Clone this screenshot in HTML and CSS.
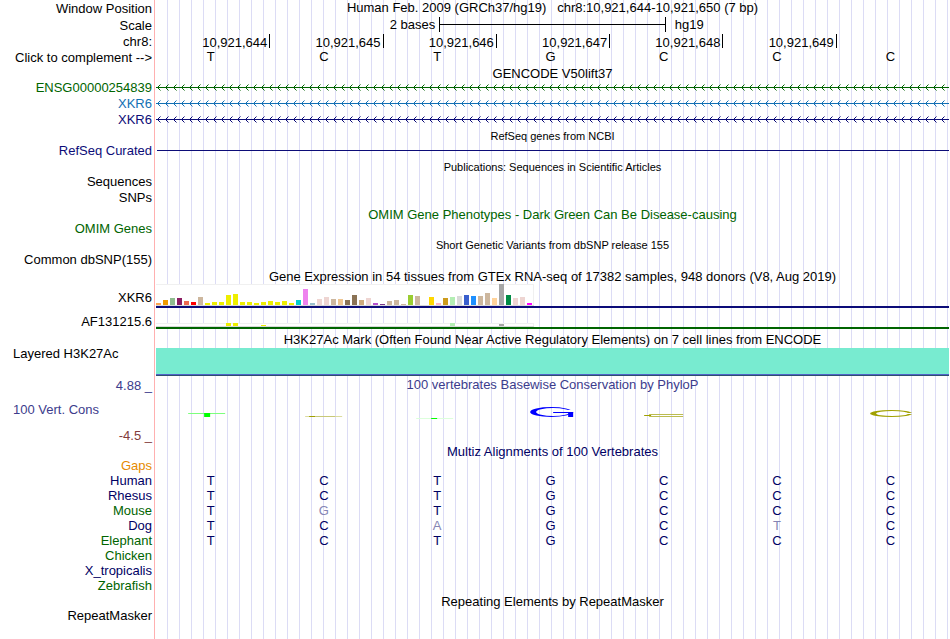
FILE: index.html
```html
<!DOCTYPE html>
<html lang="en">
<head>
<meta charset="utf-8">
<title>Human chr8:10,921,644-10,921,650</title>
<link rel="stylesheet" href="styles.css">
</head>
<body>
<main class="browser">
  <div class="row head"><span class="label">Window Position</span><div class="track"><h1 class="title raised">Human Feb. 2009 (GRCh37/hg19) &nbsp; chr8:10,921,644-10,921,650 (7 bp)</h1></div></div>
  <div class="row head"><span class="label">Scale</span><div class="track scale"><span class="scale-left">2 bases</span><span class="scale-bar"></span><span class="scale-right">hg19</span></div></div>
  <div class="row"><span class="label">chr8:</span><div class="track ticks"><span>10,921,644</span><span>10,921,645</span><span>10,921,646</span><span>10,921,647</span><span>10,921,648</span><span>10,921,649</span></div></div>
  <div class="row short"><span class="label">Click to complement --&gt;</span><div class="track bases raised"><span>T</span><span>C</span><span>T</span><span>G</span><span>C</span><span>C</span><span>C</span></div></div>

  <div class="row short"><div class="track"><h2 class="title">GENCODE V50lift37</h2></div></div>
  <div class="row green"><span class="label">ENSG00000254839</span><div class="track"><svg class="gene"><defs><pattern id="intron1" width="8" height="16" patternUnits="userSpaceOnUse"><path d="M0 7h8v1H0zM2 6h1v1H2zM2 8h1v1H2zM3 5h1v1H3zM3 9h1v1H3z"/><path opacity=".5" d="M4 4h1v1H4zM4 10h1v1H4z"/></pattern></defs><rect width="100%" height="16" fill="url(#intron1)"/></svg></div></div>
  <div class="row blue"><span class="label">XKR6</span><div class="track"><svg class="gene"><defs><pattern id="intron2" width="8" height="16" patternUnits="userSpaceOnUse"><path d="M0 7h8v1H0zM2 6h1v1H2zM2 8h1v1H2zM3 5h1v1H3zM3 9h1v1H3z"/><path opacity=".5" d="M4 4h1v1H4zM4 10h1v1H4z"/></pattern></defs><rect width="100%" height="16" fill="url(#intron2)"/></svg></div></div>
  <div class="row navy"><span class="label">XKR6</span><div class="track"><svg class="gene"><defs><pattern id="intron3" width="8" height="16" patternUnits="userSpaceOnUse"><path d="M0 7h8v1H0zM2 6h1v1H2zM2 8h1v1H2zM3 5h1v1H3zM3 9h1v1H3z"/><path opacity=".5" d="M4 4h1v1H4zM4 10h1v1H4z"/></pattern></defs><rect width="100%" height="16" fill="url(#intron3)"/></svg></div></div>

  <div class="row short"><div class="track"><h2 class="title small">RefSeq genes from NCBI</h2></div></div>
  <div class="row navy"><span class="label">RefSeq Curated</span><div class="track"><svg class="gene"><rect x="1" y="7" width="100%" height="1"/></svg></div></div>

  <div class="row short"><div class="track"><h2 class="title small">Publications: Sequences in Scientific Articles</h2></div></div>
  <div class="row"><span class="label">Sequences</span></div>
  <div class="row"><span class="label">SNPs</span></div>

  <div class="row short green"><div class="track"><h2 class="title">OMIM Gene Phenotypes - Dark Green Can Be Disease-causing</h2></div></div>
  <div class="row green"><span class="label">OMIM Genes</span></div>

  <div class="row short"><div class="track"><h2 class="title small">Short Genetic Variants from dbSNP release 155</h2></div></div>
  <div class="row"><span class="label">Common dbSNP(155)</span></div>

  <div class="row"><div class="track"><h2 class="title">Gene Expression in 54 tissues from GTEx RNA-seq of 17382 samples, 948 donors (V8, Aug 2019)</h2></div></div>
  <div class="row expression"><span class="label">XKR6</span><div class="track"><div class="bars tall" data-gene="XKR6"></div><div class="model navy-line"></div></div></div>
  <div class="row expression-low"><span class="label">AF131215.6</span><div class="track"><div class="bars low" data-gene="AF131215.6"></div><div class="model green-line"></div></div></div>

  <div class="row h3-title"><div class="track"><h2 class="title">H3K27Ac Mark (Often Found Near Active Regulatory Elements) on 7 cell lines from ENCODE</h2></div></div>
  <div class="row h3"><span class="label left">Layered H3K27Ac</span><div class="track"><div class="signal"></div></div></div>

  <div class="row cons indigo"><span class="label">4.88 _</span><div class="track"><h2 class="title">100 vertebrates Basewise Conservation by PhyloP</h2></div></div>
  <div class="row logo indigo"><span class="label left">100 Vert. Cons</span>
    <div class="track logos">
      <svg viewBox="0 0 113 32"><rect x="32" y="19" width="37" height="1" fill="#7dff7d"/><rect x="48" y="19" width="6" height="4" fill="#0f0"/></svg>
      <svg viewBox="0 0 113 32"><rect x="36" y="22" width="37" height="1" fill="#dcdca0"/><rect x="40" y="22" width="6" height="1" fill="#a0a000"/><rect x="46" y="22" width="20" height="1" fill="#c8c878"/></svg>
      <svg viewBox="0 0 113 32"><rect x="33" y="24" width="37" height="1" fill="#dcffdc"/><rect x="48" y="24" width="6" height="1" fill="#0f0"/></svg>
      <svg viewBox="0 0 113 32"><defs><mask id="open-g"><rect width="113" height="32" fill="#fff"/><ellipse cx="57" cy="18" rx="17" ry="4" fill="#000"/><rect x="70" y="16" width="12" height="2" fill="#000"/></mask></defs><ellipse cx="55" cy="18" rx="21" ry="5" fill="#00f" mask="url(#open-g)"/><rect x="57" y="18" width="20" height="1" fill="#00f"/><rect x="72" y="18" width="5" height="5" fill="#00f"/></svg>
      <svg viewBox="0 0 113 32"><rect x="40" y="20" width="34" height="1" fill="#bcbc50"/><rect x="35" y="21" width="7" height="1" fill="#a0a000"/><rect x="40" y="22" width="34" height="1" fill="#bcbc50"/></svg>
      <svg viewBox="0 0 113 32"></svg>
      <svg viewBox="0 0 113 32"><defs><mask id="open-c"><rect width="113" height="32" fill="#fff"/><ellipse cx="56" cy="19.500" rx="16" ry="2.500" fill="#000"/><rect x="70" y="19" width="9" height="1" fill="#000"/></mask></defs><ellipse cx="55" cy="19.500" rx="21" ry="3.500" fill="#a0a000" mask="url(#open-c)"/></svg>
    </div>
  </div>
  <div class="row cons-end maroon"><span class="label">-4.5 _</span></div>

  <div class="row short align-blue"><div class="track"><h2 class="title">Multiz Alignments of 100 Vertebrates</h2></div></div>
  <div class="row short orange"><span class="label">Gaps</span></div>
  <div class="row short align-blue"><span class="label">Human</span><div class="track bases"><span>T</span><span>C</span><span>T</span><span>G</span><span>C</span><span>C</span><span>C</span></div></div>
  <div class="row short align-blue"><span class="label">Rhesus</span><div class="track bases"><span>T</span><span>C</span><span>T</span><span>G</span><span>C</span><span>C</span><span>C</span></div></div>
  <div class="row short align-blue"><span class="label green">Mouse</span><div class="track bases"><span>T</span><span class="diff">G</span><span>T</span><span>G</span><span>C</span><span>C</span><span>C</span></div></div>
  <div class="row short align-blue"><span class="label">Dog</span><div class="track bases"><span>T</span><span>C</span><span class="diff">A</span><span>G</span><span>C</span><span class="diff">T</span><span>C</span></div></div>
  <div class="row short align-blue"><span class="label green">Elephant</span><div class="track bases"><span>T</span><span>C</span><span>T</span><span>G</span><span>C</span><span>C</span><span>C</span></div></div>
  <div class="row short green"><span class="label">Chicken</span></div>
  <div class="row short align-blue"><span class="label">X_tropicalis</span></div>
  <div class="row short green"><span class="label">Zebrafish</span></div>

  <div class="row short"><div class="track"><h2 class="title">Repeating Elements by RepeatMasker</h2></div></div>
  <div class="row short"><span class="label">RepeatMasker</span></div>
</main>
<script src="bars.js"></script>
</body>
</html>
```
FILE: styles.css
```css
* { box-sizing: border-box; }

body {
  margin: 0;
  background: #fff;
  color: #000;
  font: 13px/16px "Liberation Sans", Arial, sans-serif;
}

/* label gutter, pink divider, then a guide line every 12px */
.browser {
  min-height: 100vh;
  background:
    linear-gradient(#ffb0b0, #ffb0b0) 154px 0 / 1px 100% no-repeat,
    linear-gradient(#fff, #fff) 0 0 / 156px 100% no-repeat,
    linear-gradient(to right, #dcdcf5 1px, transparent 1px) 11px 0 / 12px 100% repeat-x;
}

.row {
  display: grid;
  grid-template-columns: 152px minmax(0, 1fr);
  column-gap: 4px;
  height: 16px;
  padding-right: 1px;
  align-items: center;
}
.row.head { height: 17px; }
.row.short { height: 15px; }

.label {
  text-align: right;
  white-space: nowrap;
}
.label.left {
  text-align: left;
  padding-left: 13px;
}

.track {
  grid-column: 2;
  height: 100%;
  min-width: 0;
}

.title {
  margin: 0;
  font-size: 13px;
  line-height: 18px;
  font-weight: normal;
  text-align: center;
  white-space: nowrap;
}
.title.small {
  font-size: 11px;
  line-height: 16px;
}
.raised { line-height: 14px; }
.title.raised { line-height: 16px; }

.green { color: #006400; }
.blue { color: #1270b4; }
.navy { color: #0c0c78; }
.indigo { color: #3c3c8c; }
.maroon { color: #823c3c; }
.orange { color: #e68a00; }
.align-blue { color: #000064; }

.scale {
  display: grid;
  grid-template-columns: 5fr 4fr 5fr;
}
.scale-left {
  text-align: right;
  padding-right: 4px;
}
.scale-right { padding-left: 9px; }
.scale-bar {
  height: 15px;
  border: solid #000;
  border-width: 0 1px;
  background: linear-gradient(#000, #000) 0 7px / 100% 1px no-repeat;
}

.ticks, .bases, .logos {
  display: grid;
  grid-template-columns: repeat(7, minmax(0, 1fr));
}
.ticks span {
  height: 14px;
  margin-right: -1px;
  padding-right: 2px;
  border-right: 1px solid #000;
  line-height: 18px;
  text-align: right;
}
.bases span {
  padding-right: 4px;
  text-align: center;
}
.diff { color: #8484b4; }

.gene {
  display: block;
  width: 100%;
  height: 16px;
  fill: currentColor;
  shape-rendering: crispEdges;
}

.row.expression { height: 28px; }
.row.expression-low { height: 19px; }
.bars {
  display: flex;
  align-items: flex-end;
  gap: 2px;
  width: 378px;
  background: #fff;
  border: solid #f0f0f0;
  border-width: 1px 1px 0 0;
}
.bars.tall { height: 21px; }
.bars.low {
  height: 3px;
  margin-top: 11px;
}
.bar {
  flex: none;
  width: 5px;
}
.model {
  height: 3px;
  border-bottom: 2px solid;
  background: linear-gradient(#d8d8d8, #d8d8d8) 0 0 / 378px 1px no-repeat;
}
.navy-line { border-color: #0c0c78; }
.green-line { border-color: #006400; }

.row.h3-title { height: 17px; }
.row.h3 {
  height: 28px;
  align-items: start;
}
.h3 .label { line-height: 12px; }
.signal {
  height: 100%;
  background: #78ebd0;
  border-bottom: 1px solid #2f4f6f;
  box-shadow: inset 0 -1px #5064c8;
}

.row.cons { height: 18px; }
.row.cons-end { height: 17px; }
.cons .label, .cons-end .label { line-height: 20px; }
.row.logo { height: 32px; }
.logos svg {
  display: block;
  width: 100%;
  height: 32px;
}
```
FILE: bars.js
```js
// Tissue colours in GTEx order, one per bar.
const colours = [
  "#ffa54f", "#ee9a00", "#8fbc8f", "#8b1c62", "#ee6a50", "#ff0000", "#cdb79e",
  "#eeee00", "#eeee00", "#eeee00", "#eeee00", "#eeee00", "#eeee00", "#eeee00",
  "#eeee00", "#eeee00", "#eeee00", "#eeee00", "#eeee00", "#eeee00",
  "#00cdcd", "#ee82ee", "#9ac0cd", "#eed5d2", "#eed5d2", "#cdb79e", "#eec591",
  "#8b7355", "#8b7355", "#cdaa7d", "#eed5d2", "#b452cd", "#7a378b", "#cdb79e",
  "#cdb79e", "#cdb79e", "#9acd32", "#cdb79e", "#7a67ee", "#ffd700", "#ffb6c1",
  "#cd9b1d", "#b4eeb4", "#d9d9d9", "#3a5fcd", "#1e90ff", "#cdb79e", "#cdb79e",
  "#ffd39b", "#a6a6a6", "#008b45", "#eed5d2", "#eed5d2", "#ff00ff"
];

const low = new Array(54).fill(0);
low[10] = 3; low[11] = 3; low[15] = 1; low[42] = 3; low[49] = 2;

const levels = {
  "XKR6": [2, 5, 7, 7, 4, 3, 8, 2, 3, 3, 10, 11, 3, 3, 2, 3, 4, 3, 4, 2, 5, 16,
    2, 6, 8, 6, 6, 5, 10, 5, 7, 2, 1, 4, 5, 1, 10, 9, 0, 8, 2, 7, 8, 9, 10, 9,
    9, 12, 7, 21, 10, 7, 8, 2],
  "AF131215.6": low
};

document.querySelectorAll(".bars").forEach(chart => {
  levels[chart.dataset.gene].forEach((level, i) => {
    const bar = document.createElement("span");
    bar.className = "bar";
    bar.style.height = level + "px";
    bar.style.background = colours[i];
    chart.append(bar);
  });
});
```
